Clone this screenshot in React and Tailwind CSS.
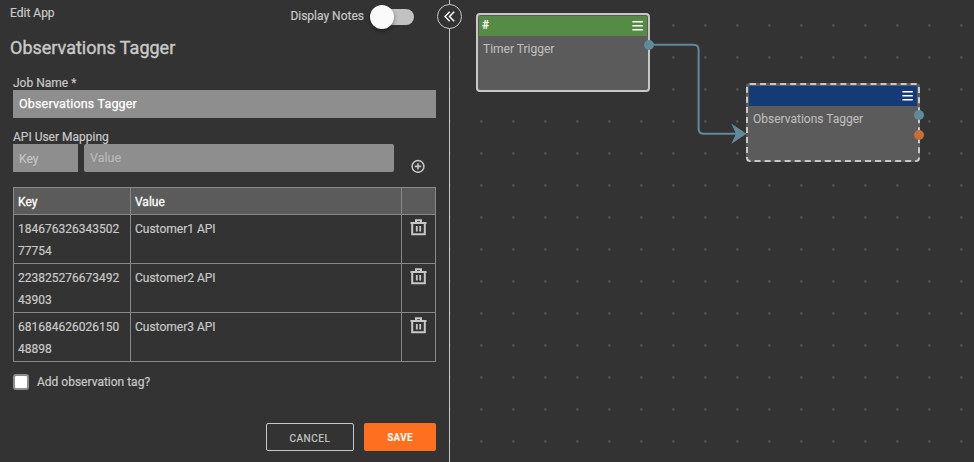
import React from "react";

const rows = [
  { key: "18467632634350277754", value: "Customer1 API" },
  { key: "22382527667349243903", value: "Customer2 API" },
  { key: "68168462602615048898", value: "Customer3 API" },
];

function TrashIcon() {
  return (
    <svg width="17" height="17" viewBox="0 0 17 17" fill="none" stroke="#c8c8c8" className="mt-[4px] block">
      <path d="M0.5 4H16.5" strokeWidth="2" />
      <path d="M6 3.6V1.3H11V3.6" strokeWidth="2" />
      <path d="M2.2 4V15.3H14.8V4" strokeWidth="2" />
      <path d="M6.8 7V12.6M10.2 7V12.6" strokeWidth="1.8" />
    </svg>
  );
}

function PlusCircleIcon() {
  return (
    <svg width="14" height="14" viewBox="0 0 14 14" fill="none" stroke="#c8c8c8" className="mt-[15px] ml-[17px] block">
      <circle cx="7" cy="7.4" r="5.9" strokeWidth="1.5" />
      <path d="M7 4.2V10.6M3.8 7.4H10.2" strokeWidth="1.6" />
    </svg>
  );
}

function MenuIcon() {
  return (
    <svg width="11" height="10" viewBox="0 0 11 10" className="-mt-px block" fill="#fff">
      <path d="M0.4 0H10.8V1.6H0.4ZM0.4 4H10.8V5.6H0.4ZM0.4 8H10.8V9.6H0.4Z" />
    </svg>
  );
}

function Node({ symbol, title, header, frame, place }) {
  return (
    <div className={`absolute h-[79px] w-[174px] rounded-[4px] border-2 bg-[#5b5b5b] p-px ${frame} ${place}`}>
      <div className={`flex h-5 items-center justify-between rounded-t-[1px] pr-[4px] pl-[3px] ${header}`}>
        <span className="-mt-[2px] text-[12px] leading-none font-bold text-white">{symbol}</span>
        <MenuIcon />
      </div>
      <div className="pt-[5px] pl-[4px] text-[12px] leading-[16px] text-[#bdbdbd] [-webkit-text-stroke:0.1px]">{title}</div>
    </div>
  );
}

function Panel() {
  return (
    <section className="relative flex w-[450px] shrink-0 flex-col border-r border-[#c8c8c8] [-webkit-text-stroke:0.2px]">
      <div className="flex h-[34px] items-start justify-between pr-[35px] pl-[10px]">
        <span className="mt-[5px] text-[12px] leading-4">Edit App</span>
        <div className="mt-[5px] flex items-start">
          <span className="mt-[3px] text-[12px] leading-4">Display Notes</span>
          <span className="mt-[4px] ml-[8px] flex h-4 w-[42px] items-center rounded-full bg-[#c2c2c2]">
            <i className="-ml-[2px] size-6 rounded-full bg-[#fafafa] shadow-[0_2px_4px_rgba(0,0,0,0.4)]" />
          </span>
        </div>
      </div>
      <h1 className="mt-[2px] ml-[10px] text-[18px] leading-6 [-webkit-text-stroke:0.4px]">Observations Tagger</h1>

      <div className="mt-[15px] ml-[13px] flex w-[423px] flex-col">
        <label className="h-[15px] text-[12px] leading-4">Job Name *</label>
        <div className="flex h-7 items-center bg-[#8e8e8e] pt-px pl-[6px] text-[12.5px] tracking-[0.17px] text-white [-webkit-text-stroke:0.25px]">
          Observations Tagger
        </div>
        <label className="mt-[11px] h-[15px] text-[12px] leading-4">API User Mapping</label>
        <div className="flex h-7 items-start">
          <div className="flex h-7 w-[65px] items-center bg-[#8e8e8e] pt-px pl-[6px] text-[12px] text-[#c4c4c4]">Key</div>
          <div className="ml-[6px] flex h-7 w-[310px] items-center rounded-[2px] bg-[#8e8e8e] pl-[6px] text-[12.5px] text-[#b5b9bb]">
            Value
          </div>
          <PlusCircleIcon />
        </div>

        <div className="mt-[15px] flex flex-col border-t border-l border-[#88888c] text-[12px]">
          <div className="grid h-[27px] grid-cols-[117px_271px_34px] bg-[#5b5b5b] text-white [-webkit-text-stroke:0.3px]">
            <div className="border-r border-b border-[#88888c] pt-[3px] pl-[4px] leading-[22px]">Key</div>
            <div className="border-r border-b border-[#88888c] pt-[3px] pl-[4px] leading-[22px]">Value</div>
            <div className="border-r border-b border-[#88888c]" />
          </div>
          {rows.map((row) => (
            <div key={row.key} className="grid h-[49px] grid-cols-[117px_271px_34px]">
              <div className="border-r border-b border-[#88888c] pt-[3px] pr-[8px] pl-[4px] leading-[22px] break-all">{row.key}</div>
              <div className="border-r border-b border-[#88888c] pt-[3px] pl-[4px] leading-[22px]">{row.value}</div>
              <div className="flex justify-center border-r border-b border-[#88888c]">
                <TrashIcon />
              </div>
            </div>
          ))}
        </div>

        <div className="mt-[12px] flex h-4 items-center">
          <span className="size-4 rounded-[3px] border-2 border-[#8e8e8e] bg-white" />
          <span className="ml-[8px] text-[12px] leading-4">Add observation tag?</span>
        </div>
        <div className="mt-[33px] flex h-7 justify-end gap-[10px] text-[10px]">
          <button className="flex w-[88px] items-center justify-center rounded-[2px] border border-[#c8c8c8] pt-[2px] tracking-[0.55px] [-webkit-text-stroke:0.2px]">
            CANCEL
          </button>
          <button className="flex w-[72px] items-center justify-center rounded-[2px] bg-[#ff6f20] font-bold tracking-[0.2px] text-white [-webkit-text-stroke:0]">
            SAVE
          </button>
        </div>
      </div>

      <button className="absolute top-[4px] left-[437px] z-10 flex size-[25px] items-center justify-center rounded-full border border-[#c8c8c8] bg-[#333333]">
        <svg width="11" height="11" viewBox="0 0 11 11" fill="none" stroke="#fff" strokeWidth="1.5">
          <path d="M5.7 0.8L1 5.5L5.7 10.2M10.2 0.8L5.5 5.5L10.2 10.2" />
        </svg>
      </button>
    </section>
  );
}

function Canvas() {
  return (
    <section className="relative flex-1 overflow-hidden">
      <svg className="absolute inset-0 h-full w-full">
        <defs>
          <pattern id="dots" x="15.3" y="9.4" width="32" height="32" patternUnits="userSpaceOnUse">
            <circle cx="16" cy="16" r="1.1" fill="#68686b" />
          </pattern>
        </defs>
        <rect width="100%" height="100%" fill="url(#dots)" />
      </svg>
      <Node
        symbol="#"
        title="Timer Trigger"
        header="bg-[#558b45]"
        frame="border-solid border-[#c8c8c8]"
        place="top-[13px] left-[26px]"
      />
      <Node
        symbol=""
        title="Observations Tagger"
        header="bg-[#153a75]"
        frame="border-dashed border-[#c8c8c8]"
        place="top-[83px] left-[296px]"
      />
      <svg className="absolute inset-0 h-full w-full" fill="none">
        <path d="M199 44.7H243.6Q248.6 44.7 248.6 49.7V128.8Q248.6 133.8 253.6 133.8H290" stroke="#5f8a99" strokeWidth="2" />
        <path d="M296.5 133.8L281.3 123.5L286 133.8L281.3 144Z" fill="#5f8a99" />
        <circle cx="199" cy="45" r="5" fill="#5f8a99" />
        <circle cx="469" cy="115" r="5" fill="#5f8a99" />
        <circle cx="469" cy="135" r="5" fill="#c86e35" />
      </svg>
    </section>
  );
}

export default function App() {
  return (
    <main className="flex h-[462px] w-[974px] overflow-hidden bg-[#333333] font-[Roboto,sans-serif] text-[#c8c8c8]">
      <Panel />
      <Canvas />
    </main>
  );
}
